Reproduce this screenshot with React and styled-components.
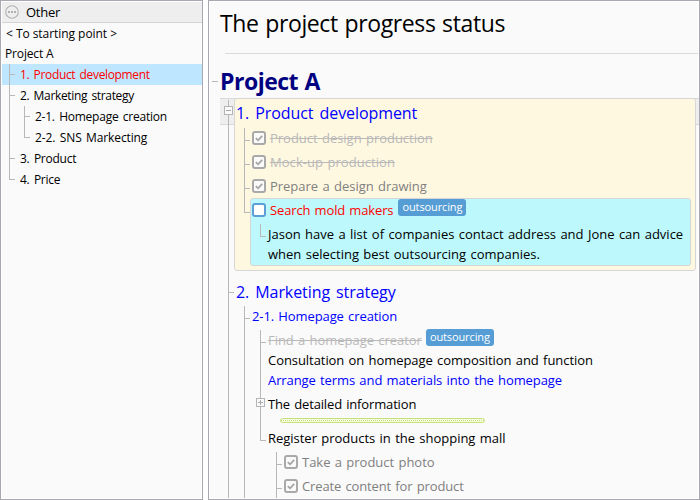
import React from 'react';
import styled, { createGlobalStyle, css } from 'styled-components';

const LINE = '#b8b8b8';

const GlobalStyle = createGlobalStyle`
  * { box-sizing: border-box; }
  body {
    margin: 0;
    background: #fff;
    color: #000;
    font-family: "Open Sans", "Noto Sans", sans-serif;
    overflow: hidden;
  }
`;

const Page = styled.div`
  display: grid;
  grid-template-columns: 203px 492px;
  column-gap: 5px;
  width: 700px;
  height: 500px;
`;

const Panel = styled.section`
  display: flex;
  flex-direction: column;
  border: 1px solid #a9a8b0;
  background: #fafafa;
  box-shadow: inset 0 0 0 1px #fff;
  overflow: hidden;
`;

/* ---------- outline list ---------- */

const Sidebar = styled(Panel)`
  padding: 1px 0 0 1px;
  font-size: 12px;
`;

const SidebarHeader = styled.header`
  display: flex;
  align-items: center;
  gap: 7px;
  height: 21px;
  padding-left: 3px;
  background: #eee;
  border-bottom: 1px solid #d4d4d4;
  font-size: 13px;
  letter-spacing: -0.25px;
`;

const OutlineItem = styled.div`
  display: flex;
  align-items: center;
  height: ${(p) => (p.$first ? 20 : 21)}px;
  padding-left: ${(p) => (p.$nested ? 7 : p.$first ? 4 : 3)}px;
  letter-spacing: ${(p) => p.$track ?? -0.34}px;
  word-spacing: ${(p) => (p.$nested ? 1.5 : 0)}px;
  white-space: pre;
  ${(p) => p.$active && css`
    background: #bee6ff;
    color: #ff0000;
  `}
`;

/* One indentation step: a vertical line, with an arm to the item when it belongs to this level. */
const Guide = styled.span`
  flex: none;
  align-self: stretch;
  width: ${(p) => (p.$arm ? 11 : 15)}px;
  background:
    linear-gradient(${LINE}, ${LINE}) 0 0 / 1px ${(p) => (p.$last ? '11px' : '100%')} no-repeat,
    linear-gradient(${LINE}, ${LINE}) 0 10px / ${(p) => (p.$arm ? 6 : 0)}px 1px no-repeat;
`;

/* ---------- document ---------- */

const Document = styled(Panel)`
  padding-left: 11px;
  font-size: 13px;
  word-spacing: 1px;
  letter-spacing: -0.02px;
  white-space: pre;
`;

const Title = styled.h1`
  margin: 0 1px 0 5px;
  height: 53px;
  padding-top: 4px;
  border-bottom: 1px solid #dadada;
  font-size: 23px;
  line-height: 36px;
  font-weight: 400;
  letter-spacing: -0.37px;
  text-indent: -5px;
`;

const ProjectName = styled.h2`
  display: flex;
  align-items: flex-start;
  margin: 0 0 0 -8px;
  height: 44px;
  padding-top: 10px;
  font-size: 23px;
  line-height: 34px;
  font-weight: 700;
  letter-spacing: -0.5px;
  color: #000080;
`;

const Tick = styled.span`
  flex: none;
  align-self: flex-start;
  width: 6px;
  height: 1px;
  margin: ${(p) => p.$drop ?? 14}px ${(p) => p.$gap ?? 2}px 0 0;
  background: ${LINE};
`;

const Tree = styled.div`
  display: flex;
  flex-direction: column;
  padding-right: 3px;
  background:
    linear-gradient(${LINE}, ${LINE}) 8px 2px / 1px 398px no-repeat,
    linear-gradient(#d9d9d9 1px, #eee 1px 26px, #d9d9d9 26px) 0 0 / 489px 27px no-repeat;
`;

const Selected = styled.div`
  display: grid;
  grid-template-columns: 10px 462px;
  padding-left: 4px;
`;

const ToggleIcon = styled.svg`
  display: block;
  flex: none;
  align-self: flex-start;
  margin: 8px 3px 0 0;
`;

const Card = styled.div`
  border: 1px solid #d6d6d6;
  border-radius: 3px;
`;

const ProductCard = styled(Card)`
  height: 173px;
  padding: 0 4px 0 1px;
  background: #fff8e1;
`;

const Heading = styled.h3`
  margin: 0;
  font-size: 16px;
  line-height: 28px;
  font-weight: 400;
  letter-spacing: -0.08px;
  word-spacing: 2px;
  color: #0000ff;
`;

/* A level of the tree; its background draws the vertical connector. */
const Branch = styled.div`
  display: flex;
  flex-direction: column;
  margin: ${(p) => p.$above || 0}px 0 0 ${(p) => p.$indent ?? 16}px;
  background: linear-gradient(${LINE}, ${LINE}) 0 ${(p) => p.$from || 0}px / 1px ${(p) => (p.$to ? `${p.$to}px` : '100%')} no-repeat;
`;

const Row = styled.div`
  display: flex;
  align-items: center;
  height: ${(p) => p.$height || 24}px;
  color: ${(p) => p.$color || '#000'};
  letter-spacing: ${(p) => p.$track ?? -0.02}px;
`;

const SectionRow = styled(Row)`
  height: 35px;
  & > h3 { padding-top: 7px; }
`;

const SubsectionRow = styled(Row)`
  height: 21px;
  padding-bottom: 1px;
`;

const PlainRow = styled(Row)`
  padding-left: 8px;
`;

const ToggleRow = styled(Row)`
  margin-left: -4px;
`;

const LoweredLabel = styled.span`
  padding-top: 3px;
`;

const Struck = styled.s`
  color: #b9b9b9;
  text-decoration-thickness: 1px;
`;

const Check = styled.span`
  display: grid;
  place-items: center;
  flex: none;
  width: 14px;
  height: 14px;
  margin-right: 4px;
  border: 2px solid ${(p) => (p.$open ? '#5b9fd6' : '#a9a9a9')};
  border-radius: 3px;
  background: ${(p) => (p.$open ? '#fff' : '#fafafa')};
`;

const Tag = styled.span`
  align-self: flex-start;
  flex: none;
  margin: ${(p) => (p.$raised ? -1 : 0)}px 0 0 ${(p) => (p.$raised ? 4 : 5)}px;
  width: 68px;
  height: 17px;
  border-radius: 3px;
  background: #559dd4;
  color: #fff;
  font-size: 11px;
  line-height: 16px;
  letter-spacing: -0.12px;
  text-align: center;
`;

const TaskItem = styled.div`
  display: flex;
`;

const TaskCard = styled(Card)`
  flex: 1;
  height: 68px;
  padding-left: 1px;
  background: #bdf9fc;
`;

const Note = styled.div`
  display: flex;
  gap: 2px;
  margin: 3px 0 0 8px;
  line-height: 20px;
  letter-spacing: 0;
`;

const Elbow = styled.span`
  width: 6px;
  height: 13px;
  border: solid ${LINE};
  border-width: 0 0 1px 1px;
`;

const Ribbon = styled.div`
  width: 205px;
  height: 5px;
  margin-left: 20px;
  border: 1px solid #c9e07f;
  border-radius: 3px;
  background: repeating-linear-gradient(90deg, #c3dc74 0 1px, #fcfff0 1px 2px) center / 100% 1px no-repeat #f4fbdc;
`;

function Toggle({ plus }) {
  return (
    <ToggleIcon width="9" height="9" shapeRendering="crispEdges">
      <rect x="0.5" y="0.5" width="8" height="8" fill="#fafafa" stroke="#b5b5b5" />
      <path d={plus ? 'M2 4.5h5M4.5 2v5' : 'M2 4.5h5'} stroke="#aaa" />
    </ToggleIcon>
  );
}

function Box({ open }) {
  return (
    <Check $open={open}>
      {!open && (
        <svg width="10" height="10" viewBox="0 0 10 10">
          <path d="M1.8 5.2 4.1 7.3 8.2 2.8" fill="none" stroke="#a5a5a5" strokeWidth="1.8" />
        </svg>
      )}
    </Check>
  );
}

export default function App() {
  return (
    <>
      <GlobalStyle />
      <Page>
        <Sidebar>
          <SidebarHeader>
            <svg width="14" height="14" viewBox="0 0 14 14">
              <circle cx="7" cy="7" r="6.3" fill="none" stroke="#b0b0b0" strokeWidth="1.1" />
              <path d="M3 6h2v2H3zM6 6h2v2H6zM9 6h2v2H9z" fill="#b0b0b0" />
            </svg>
            Other
          </SidebarHeader>
          <OutlineItem $first $track={-0.05}>{'< To starting point >'}</OutlineItem>
          <OutlineItem $track={-0.15}>Project A</OutlineItem>
          <OutlineItem $nested $active><Guide $arm />1. Product development</OutlineItem>
          <OutlineItem $nested><Guide $arm />2. Marketing strategy</OutlineItem>
          <OutlineItem $nested $track={-0.24}><Guide /><Guide $arm />2-1. Homepage creation</OutlineItem>
          <OutlineItem $nested $track={-0.12}><Guide /><Guide $arm $last />2-2. SNS Markecting</OutlineItem>
          <OutlineItem $nested $track={-0.25}><Guide $arm />3. Product</OutlineItem>
          <OutlineItem $nested $track={-0.25}><Guide $arm $last />4. Price</OutlineItem>
        </Sidebar>

        <Document>
          <Title>The project progress status</Title>
          <ProjectName><Tick $drop={17} />Project A</ProjectName>
          <Tree>
            <Selected>
              <Toggle />
              <ProductCard>
                <Heading>1. Product development</Heading>
                <Branch $indent={8} $above={-1} $from={2} $to={85}>
                  <Row><Tick /><Box /><Struck>Product design production</Struck></Row>
                  <Row $track={0.05}><Tick /><Box /><Struck>Mock-up production</Struck></Row>
                  <Row $color="#808080"><Tick /><Box />Prepare a design drawing</Row>
                  <TaskItem>
                    <Tick $gap={0} />
                    <TaskCard>
                      <Row $height={22} $color="#ff0000" $track={-0.14}><Box open />Search mold makers<Tag>outsourcing</Tag></Row>
                      <Note>
                        <Elbow />
                        {'Jason have a list of companies contact address and Jone can advice\nwhen selecting best outsourcing companies.'}
                      </Note>
                    </TaskCard>
                  </TaskItem>
                </Branch>
              </ProductCard>
            </Selected>

            <Branch $indent={8}>
              <SectionRow><Tick $drop={21} /><Heading>2. Marketing strategy</Heading></SectionRow>
              <Branch>
                <SubsectionRow $color="#0000ff" $track={-0.1}><Tick $drop={12} />2-1. Homepage creation</SubsectionRow>
                <Branch $above={3} $to={111}>
                  <Row $height={20} $track={-0.04}><Tick $drop={12} /><Struck>Find a homepage creator</Struck><Tag $raised>outsourcing</Tag></Row>
                  <PlainRow $height={20} $track={-0.06}>Consultation on homepage composition and function</PlainRow>
                  <PlainRow $height={20} $color="#0000ff" $track={-0.09}>Arrange terms and materials into the homepage</PlainRow>
                  <ToggleRow $height={28} $track={-0.15}><Toggle plus />The detailed information</ToggleRow>
                  <Ribbon />
                  <Row $height={27}><Tick $drop={17} /><LoweredLabel>Register products in the shopping mall</LoweredLabel></Row>
                  <Branch $from={2}>
                    <Row $color="#808080"><Tick /><Box />Take a product photo</Row>
                    <Row $color="#808080" $track={-0.13}><Tick /><Box />Create content for product</Row>
                  </Branch>
                </Branch>
              </Branch>
            </Branch>
          </Tree>
        </Document>
      </Page>
    </>
  );
}
